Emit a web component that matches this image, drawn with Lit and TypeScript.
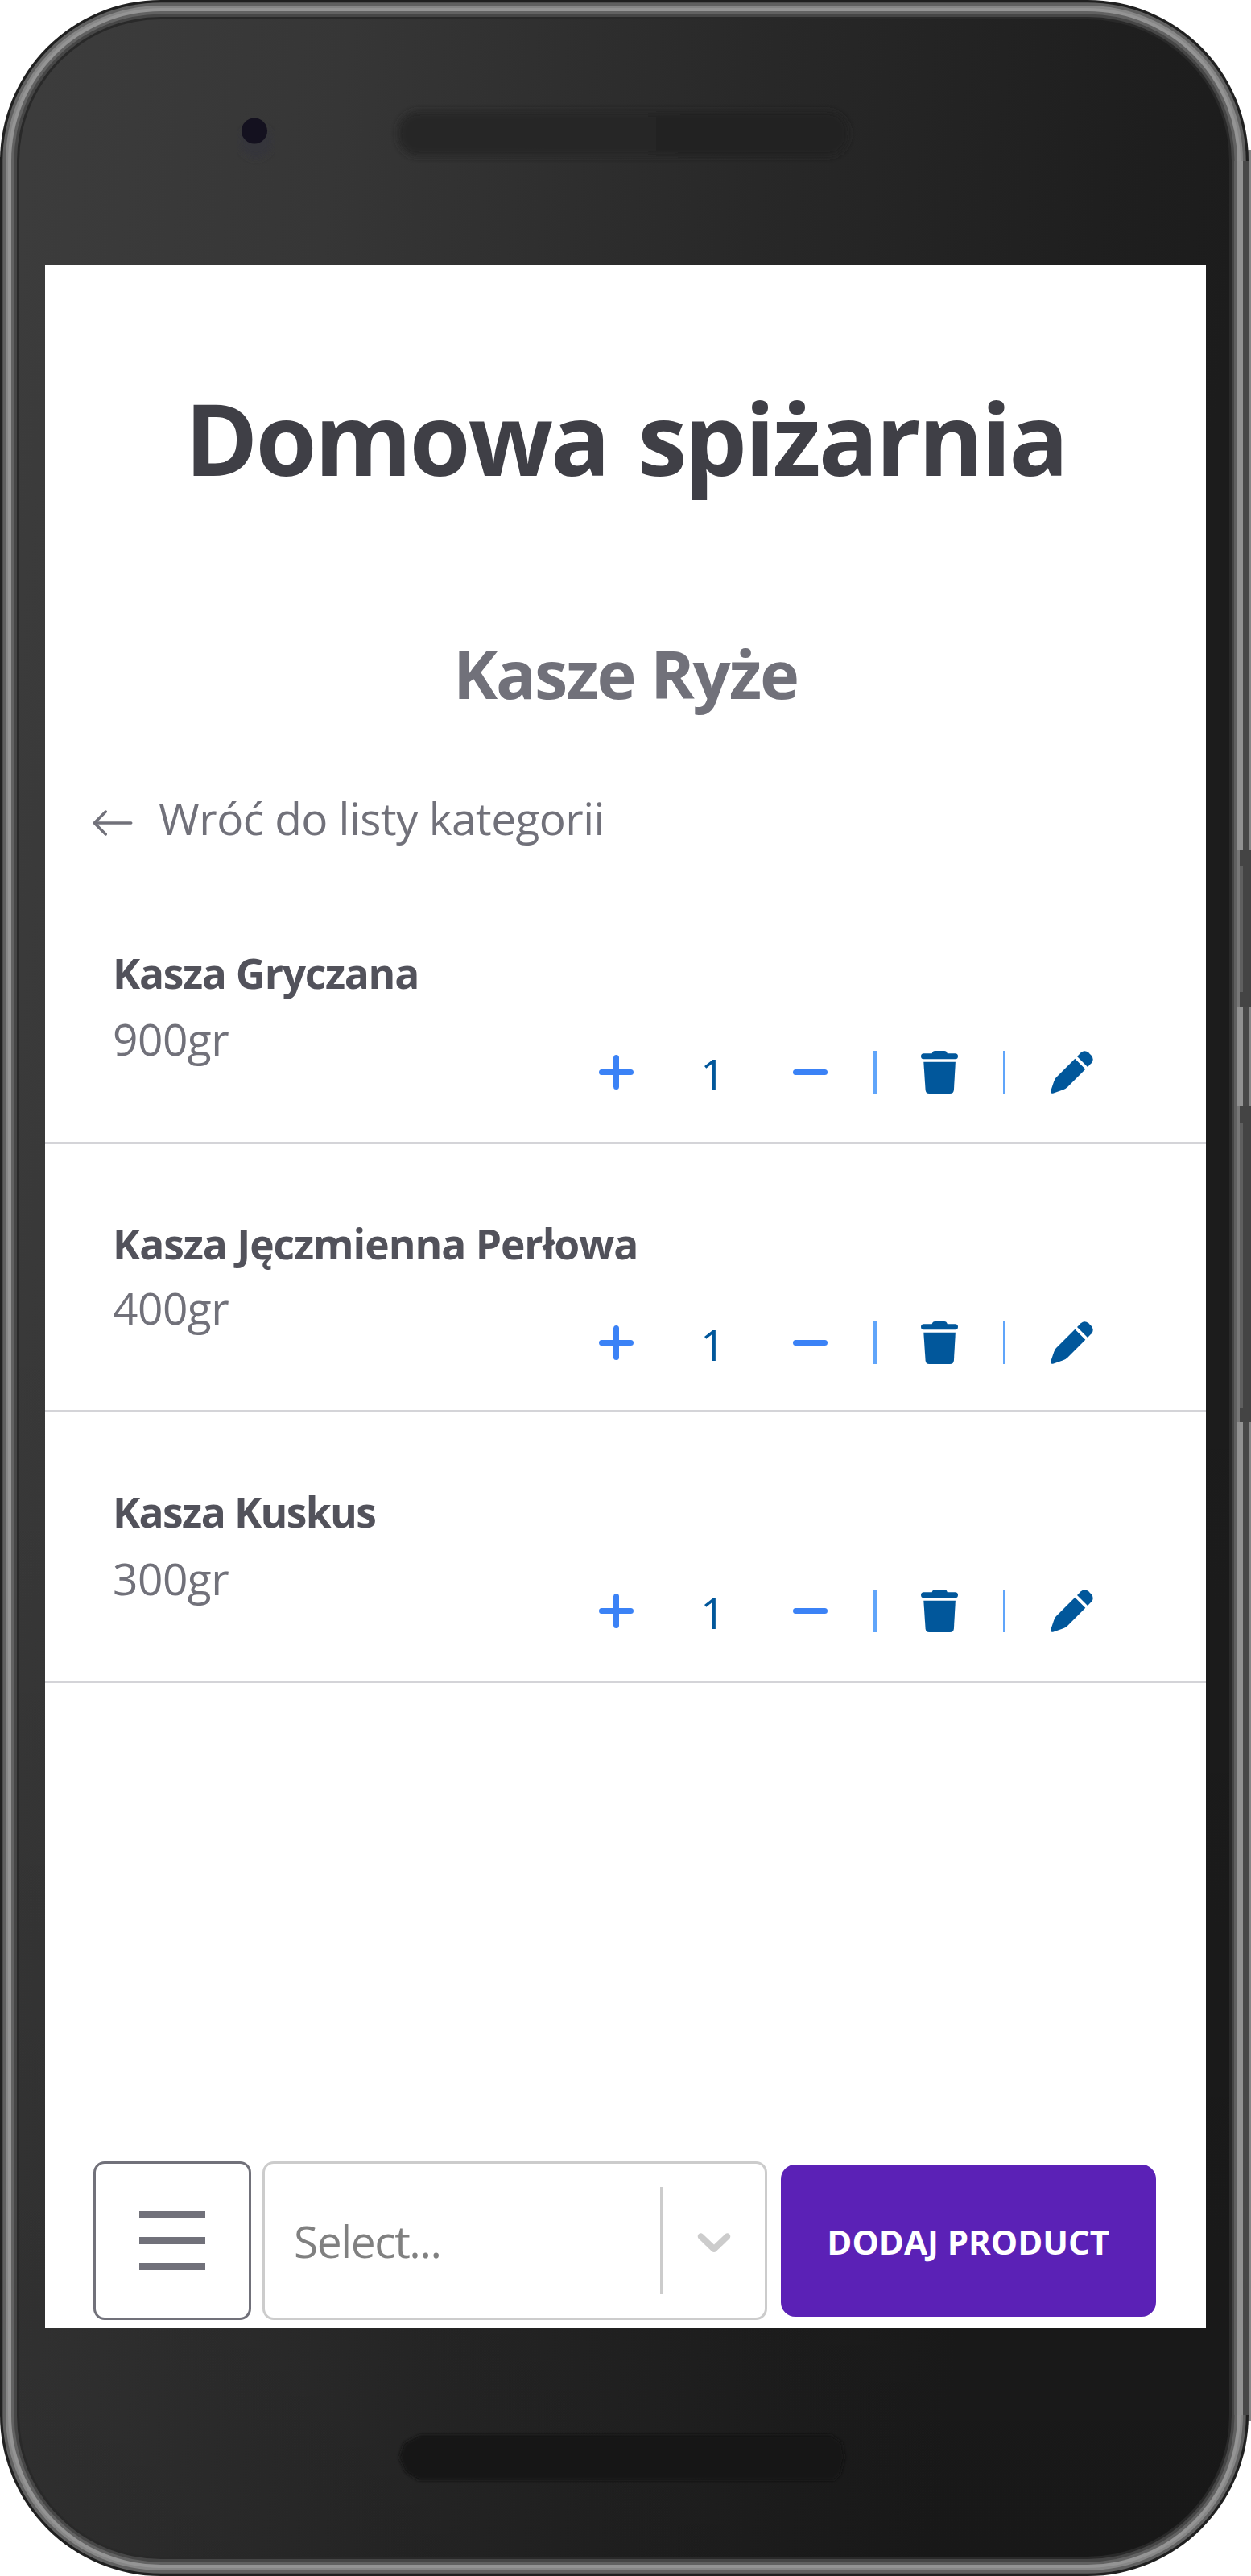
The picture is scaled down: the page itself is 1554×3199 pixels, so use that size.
import { LitElement, html, css, svg } from "lit";
import { customElement, property } from "lit/decorators.js";

interface Product {
  name: string;
  size: string;
  count: number;
}

const PRODUCTS: Product[] = [
  { name: "Kasza Gryczana", size: "900gr", count: 1 },
  { name: "Kasza Jęczmienna Perłowa", size: "400gr", count: 1 },
  { name: "Kasza Kuskus", size: "300gr", count: 1 },
];

/* Rings of the metal rim, from the outer edge inwards: inset and colour. */
const RIM: Array<[number, string]> = [
  [0, "#202020"],
  [3.3, "#606060"],
  [7, "#868686"],
  [10, "#949494"],
  [14, "#626262"],
  [17.5, "#464646"],
  [21, "#292929"],
];

@customElement("phone-body")
export class PhoneBody extends LitElement {
  static styles = css`
    :host { display: block; }
    svg { display: block; width: 1554px; height: 3199px; }
  `;

  private ring(inset: number, fill: string) {
    return svg`<rect x=${inset} y=${inset} width=${1551 - inset * 2} height=${3199 - inset * 2} rx=${200 - inset} fill=${fill} />`;
  }

  render() {
    return html`<svg viewBox="0 0 1554 3199">
      <defs>
        <linearGradient id="shell" gradientUnits="userSpaceOnUse" x1="60" y1="0" x2="1554" y2="200">
          <stop offset="0" stop-color="#3c3c3c" />
          <stop offset="0.25" stop-color="#363636" />
          <stop offset="0.6" stop-color="#282828" />
          <stop offset="0.88" stop-color="#1f1f1f" />
          <stop offset="1" stop-color="#1c1c1c" />
        </linearGradient>
        <linearGradient id="shade" x1="0" y1="0" x2="0" y2="1">
          <stop offset="0.5" stop-color="#000" stop-opacity="0" />
          <stop offset="1" stop-color="#000" stop-opacity="0.14" />
        </linearGradient>
        <linearGradient id="speaker" x1="0" y1="0" x2="1" y2="0">
          <stop offset="0" stop-color="#272727" />
          <stop offset="1" stop-color="#232323" />
        </linearGradient>
        <filter id="soft" x="-10%" y="-30%" width="120%" height="160%"><feGaussianBlur stdDeviation="4" /></filter>
        <filter id="edge" x="-10%" y="-30%" width="120%" height="160%"><feGaussianBlur stdDeviation="2" /></filter>
      </defs>
      <rect x="0" y="195" width="4" height="2800" fill="#1c1c1c" />
      <rect x="1550" y="186" width="4" height="2820" fill="#868686" />
      ${RIM.map(([inset, fill]) => this.ring(inset, fill))}
      ${this.ring(24, "url(#shell)")}
      ${this.ring(24, "url(#shade)")}
      <rect x="1533" y="200" width="4" height="2799" fill="#606060" />
      <rect x="1537" y="200" width="7" height="2799" fill="#929292" />
      <rect x="1544" y="200" width="7" height="2799" fill="#484848" />
      <circle cx="318" cy="176" r="20" fill="#35343b" filter="url(#soft)" />
      <circle cx="316" cy="162.500" r="16" fill="#14111f" />
      <rect x="494" y="138" width="560" height="56" rx="26" fill="url(#speaker)" filter="url(#soft)" />
      <path d="M522 3024H1032L1046 3034L1049 3052L1044 3072L1036 3080H520L504 3070L496 3052L502 3034Z" fill="#121212" filter="url(#edge)" />
      ${[[1056, 194], [1374, 392]].map(([y, h]) => svg`
        <rect x="1537" y=${y} width="3.500" height=${h} fill="#787878" />
        <rect x="1540" y=${y} width="14" height=${h} fill="#444" />
        <rect x="1540" y=${y + 20} width="4" height=${h - 38} fill="#5f5f5f" />`)}
    </svg>`;
  }
}

@customElement("product-row")
export class ProductRow extends LitElement {
  @property({ attribute: false }) product!: Product;

  static styles = css`
    :host { display: flex; flex-direction: column; box-sizing: border-box; flex: none; border-bottom: 3.5px solid #d4d4d8; padding-left: 84px; }
    .name { font-size: 51.5px; line-height: 80px; font-weight: 700; color: #52525b; white-space: nowrap; letter-spacing: var(--name-tracking); }
    .size { margin-top: var(--size-gap); font-size: 55px; line-height: 80px; color: #71717a; letter-spacing: -0.5px; }
    .actions { display: flex; align-items: center; height: 53px; margin: var(--actions-gap) 0 0 603.5px; color: #01579b; }
    .sign { width: 43px; height: 43px; stroke: #3b82f6; stroke-width: 7; stroke-linecap: round; }
    .count { width: 198px; text-align: center; font-size: 53px; line-height: 53px; padding-top: 4px; }
    .bar { width: 3.5px; height: 53px; background: #60a5fa; }
    .minus { margin-right: 57.5px; }
    .trash { width: 46px; height: 53px; margin: 0 55.5px; }
    .pencil { width: 53px; height: 53px; margin-left: 56px; }
  `;

  render() {
    const p = this.product;
    return html`
      <div class="name">${p.name}</div>
      <div class="size">${p.size}</div>
      <div class="actions">
        <svg class="sign" viewBox="0 0 43 43"><path d="M3.500 21.500H39.500M21.500 3.500V39.500" /></svg>
        <span class="count">${p.count}</span>
        <svg class="sign minus" viewBox="0 0 43 43"><path d="M3.500 21.500H39.500" /></svg>
        <span class="bar"></span>
        <svg class="trash" viewBox="0 0 46 53" fill="currentColor">
          <path d="M3.500 3.300H13.700C14.200 1.200 15.500 0 17.500 0H29C31 0 32.300 1.200 32.800 3.300H42.500A3.500 3.500 0 0 1 42.500 10.300H3.500A3.500 3.500 0 0 1 3.500 3.300Z" />
          <path d="M3.300 13.700H42.900L40.900 48.500Q40.500 53 36 53H10.300Q6 53 5.600 48.500Z" />
        </svg>
        <span class="bar"></span>
        <svg class="pencil" viewBox="0 0 53 53" fill="currentColor">
          <path d="M30.300 9.700L43.300 22.700L20.800 45.200Q18.700 47.300 15.800 48.300L3 52.800Q-0.300 53.300 0.200 49.800L4.200 38Q5 35.200 7 33Z" />
          <path d="M33 7L37.700 2.300Q42.300 -1.800 47.200 2.300L50.700 5.800Q54.700 10.700 50.700 15.300L46 20Z" />
        </svg>
      </div>`;
  }
}

@customElement("app-root")
export class AppRoot extends LitElement {
  static styles = css`
    :host { display: block; width: 1554px; height: 3199px; background: #fff; font-family: "Open Sans", "Noto Sans", sans-serif; }
    * { box-sizing: border-box; }
    .phone { position: relative; height: 3199px; overflow: hidden; padding: 329px 56px 308px; }
    phone-body { position: absolute; inset: 0; }
    .screen { position: relative; width: 1442px; height: 2562px; background: #fff; display: flex; flex-direction: column; }
    h1 { margin: 128px 0 0; font-size: 123px; line-height: 174px; font-weight: 700; color: #3f3f46; text-align: center; letter-spacing: -3px; word-spacing: 8px; white-space: nowrap; }
    h2 { margin: 147px 0 0; font-size: 83px; line-height: 116px; font-weight: 700; color: #71717a; text-align: center; letter-spacing: -2.1px; white-space: nowrap; }
    .back { display: flex; align-items: center; flex: none; height: 84px; margin: 79px 0 30px 56px; gap: 29px; color: #71717a; font-size: 55px; letter-spacing: -0.55px; }
    .back svg { width: 56px; height: 56px; margin-top: 14px; }
    product-row { height: 334px; padding-top: 80.7px; --size-gap: 2.7px; --actions-gap: -25px; --name-tracking: -1.3px; }
    product-row:nth-of-type(2) { height: 332.5px; padding-top: 83px; --size-gap: 0px; --actions-gap: -23.5px; --name-tracking: -1.05px; }
    product-row:nth-of-type(3) { height: 336px; padding-top: 83px; --size-gap: 3px; --actions-gap: -25.8px; --name-tracking: -1.6px; }
    .footer { display: flex; align-items: center; margin: auto 0 10px 59.5px; height: 197px; }
    .menu { width: 196.5px; height: 197px; border: 3.5px solid #71717a; border-radius: 14px; display: flex; flex-direction: column; align-items: center; justify-content: center; gap: 23.3px; }
    .menu i { width: 82.5px; height: 8.7px; background: #71717a; }
    .select { width: 627px; height: 197px; margin-left: 14px; border: 3.5px solid #ccc; border-radius: 14px; display: flex; align-items: center; padding-left: 36px; color: #808080; font-size: 55px; letter-spacing: -1.4px; }
    .select span { flex: 1; }
    .rule { width: 3.5px; height: 133px; background: #ccc; }
    .chevron { width: 70px; height: 70px; margin: 0 28.5px 0 28px; fill: #ccc; }
    .add { width: 465.5px; height: 189px; margin-left: 17px; border: 0; border-radius: 18px; background: #5b21b6; color: #fff; font: 700 42px/60px "Open Sans", "Noto Sans", sans-serif; letter-spacing: 0; padding: 2px 0 0; white-space: nowrap; }
  `;

  render() {
    return html`<div class="phone">
      <phone-body></phone-body>
      <main class="screen">
        <h1>Domowa spiżarnia</h1>
        <h2>Kasze Ryże</h2>
        <div class="back">
          <svg viewBox="0 0 16 16" fill="currentColor"><path d="M15 8a.5.5 0 0 0-.5-.5H2.707l3.147-3.146a.5.5 0 1 0-.708-.708l-4 4a.5.5 0 0 0 0 .708l4 4a.5.5 0 0 0 .708-.708L2.707 8.5H14.5A.5.5 0 0 0 15 8z" /></svg>
          <span>Wróć do listy kategorii</span>
        </div>
        ${PRODUCTS.map((p) => html`<product-row .product=${p}></product-row>`)}
        <div class="footer">
          <div class="menu"><i></i><i></i><i></i></div>
          <div class="select">
            <span>Select...</span>
            <div class="rule"></div>
            <svg class="chevron" viewBox="0 0 20 20"><path d="M4.516 7.548c0.436-0.446 1.043-0.481 1.576 0l3.908 3.747 3.908-3.747c0.533-0.481 1.141-0.446 1.574 0 0.436 0.445 0.408 1.197 0 1.615-0.406 0.418-4.695 4.502-4.695 4.502-0.217 0.223-0.502 0.335-0.787 0.335s-0.57-0.112-0.789-0.335c0 0-4.287-4.084-4.695-4.502s-0.436-1.17 0-1.615z" /></svg>
          </div>
          <button class="add">DODAJ PRODUCT</button>
        </div>
      </main>
    </div>`;
  }
}
